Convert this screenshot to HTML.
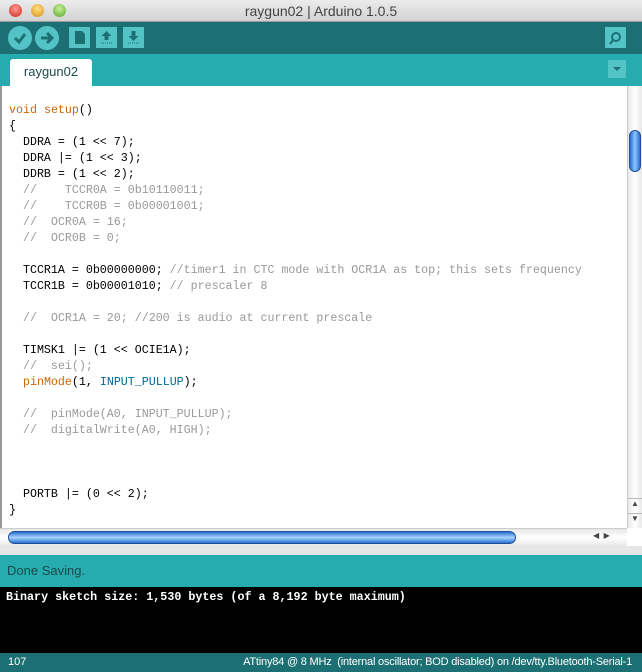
<!DOCTYPE html>
<html><head><meta charset="utf-8"><style>
*{margin:0;padding:0;box-sizing:border-box}
body{width:642px;height:672px;overflow:hidden;background:#fff;font-family:"Liberation Sans",sans-serif;position:relative}
.abs{position:absolute}
#title{left:0;top:0;width:642px;height:22px;background:linear-gradient(#ececec,#d2d2d2);border-bottom:1px solid #999;text-align:center;font-size:14px;line-height:22px;color:#444}
.tl{top:4px;width:13px;height:13px;border-radius:50%}
#tb{left:0;top:22px;width:642px;height:32px;background:#1c7074}
.rb{top:4px;width:24px;height:24px;border-radius:50%;background:#54c3c6}
.sb{top:5px;width:21px;height:21px;background:#54c3c6}
#tabs{left:0;top:54px;width:642px;height:32px;background:#26abae}
#tab{left:10px;top:5px;width:82px;height:27px;background:#fff;border-radius:3px 3px 0 0;font-size:13px;color:#1c4a4c;line-height:26px;text-align:center}
#ed{left:0;top:86px;width:627px;height:442px;background:#fff;border-left:2px solid #999}
pre{position:absolute;left:7px;top:17px;font-family:"Liberation Mono",monospace;font-size:11.65px;line-height:16px;color:#000}
.k{color:#cc6600}.c{color:#999}.t{color:#006699}
#vs{left:627px;top:86px;width:15px;height:442px;background:linear-gradient(90deg,#e8e8e8,#fff,#e8e8e8);border-left:1px solid #ccc}
#hs{left:0;top:528px;width:627px;height:18px;background:linear-gradient(#e8e8e8,#fff,#e8e8e8);border-top:1px solid #ccc}
#gs{left:0;top:546px;width:642px;height:9px;background:#e6e6e6}
#st{left:0;top:555px;width:642px;height:32px;background:#26abae;font-size:13px;color:#1c4a4c;padding:8px 0 0 7px}
#con{left:0;top:587px;width:642px;height:66px;background:#000;color:#fff;font-family:"Liberation Mono",monospace;font-weight:bold;font-size:11.7px;padding:3px 0 0 6px}
#bot{left:0;top:653px;width:642px;height:19px;background:#1c7074;color:#fff;font-size:11px;line-height:19px}
</style></head><body>
<div id="title" class="abs">raygun02 | Arduino 1.0.5</div>
<div class="abs tl" style="left:9px;background:radial-gradient(circle at 50% 35%,#ff9a90,#d0281c)"></div>
<div class="abs tl" style="left:31px;background:radial-gradient(circle at 50% 35%,#ffe08a,#d89010)"></div>
<div class="abs tl" style="left:53px;background:radial-gradient(circle at 50% 35%,#c8f098,#58a82a)"></div>
<div id="tb" class="abs">
 <div class="abs rb" style="left:8px"><svg width="24" height="24"><path d="M7 12l4 4 6-8" stroke="#1c7074" stroke-width="3" fill="none"/></svg></div>
 <div class="abs rb" style="left:35px"><svg width="24" height="24"><path d="M6 12h9M12 7l5 5-5 5" stroke="#1c7074" stroke-width="3" fill="none"/></svg></div>
 <div class="abs sb" style="left:69px"><svg width="21" height="21"><path d="M6 4h7l3 3v10H6z" fill="#1c7074"/></svg></div>
 <div class="abs sb" style="left:96px"><svg width="21" height="21"><path d="M10.5 4l5 5h-3v4h-4V9h-3z" fill="#1c7074"/><path d="M5 16h11" stroke="#1c7074" stroke-dasharray="1 1"/></svg></div>
 <div class="abs sb" style="left:123px"><svg width="21" height="21"><path d="M10.5 14l5-5h-3V4h-4v5h-3z" fill="#1c7074"/><path d="M5 16h11" stroke="#1c7074" stroke-dasharray="1 1"/></svg></div>
 <div class="abs sb" style="left:605px"><svg width="21" height="21"><circle cx="11" cy="10" r="4" stroke="#1c7074" stroke-width="2" fill="none"/><path d="M8 13l-3 4" stroke="#1c7074" stroke-width="2"/></svg></div>
</div>
<div id="tabs" class="abs"><div id="tab" class="abs">raygun02</div>
 <div class="abs" style="left:608px;top:6px;width:18px;height:18px;background:#54c3c6"><svg width="18" height="18"><path d="M5 7h8l-4 4z" fill="#1c7074"/></svg></div></div>
<div id="ed" class="abs"><pre><span class="k">void</span> <span class="k">setup</span>()
{
  DDRA = (1 &lt;&lt; 7);
  DDRA |= (1 &lt;&lt; 3);
  DDRB = (1 &lt;&lt; 2);
<span class="c">  //    TCCR0A = 0b10110011;
  //    TCCR0B = 0b00001001;
  //  OCR0A = 16;
  //  OCR0B = 0;</span>

  TCCR1A = 0b00000000; <span class="c">//timer1 in CTC mode with OCR1A as top; this sets frequency</span>
  TCCR1B = 0b00001010; <span class="c">// prescaler 8</span>

<span class="c">  //  OCR1A = 20; //200 is audio at current prescale</span>

  TIMSK1 |= (1 &lt;&lt; OCIE1A);
<span class="c">  //  sei();</span>
  <span class="k">pinMode</span>(1, <span class="t">INPUT_PULLUP</span>);

<span class="c">  //  pinMode(A0, INPUT_PULLUP);
  //  digitalWrite(A0, HIGH);</span>



  PORTB |= (0 &lt;&lt; 2);
}</pre></div>
<div id="vs" class="abs">
 <div class="abs" style="left:1px;top:44px;width:12px;height:42px;border-radius:6px;background:linear-gradient(90deg,#2a6fd0,#8cc4ff,#2a6fd0);border:1px solid #1d4f9a"></div>
 <div class="abs" style="left:0;top:412px;width:14px;height:15px;border-top:1px solid #bbb;font-size:8px;text-align:center;color:#444">▲</div>
 <div class="abs" style="left:0;top:427px;width:14px;height:15px;border-top:1px solid #bbb;font-size:8px;text-align:center;color:#444">▼</div>
</div>
<div id="hs" class="abs">
 <div class="abs" style="left:8px;top:2px;width:508px;height:13px;border-radius:7px;background:linear-gradient(#2a6fd0,#a8d4ff,#2a6fd0);border:1px solid #1d4f9a"></div>
 <div class="abs" style="left:593px;top:2px;font-size:8px;color:#444">◀ &nbsp;▶</div>
</div>
<div id="gs" class="abs"></div>
<div id="st" class="abs">Done Saving.</div>
<div id="con" class="abs">Binary sketch size: 1,530 bytes (of a 8,192 byte maximum)</div>
<div id="bot" class="abs"><span style="position:absolute;left:8px">107</span><span style="position:absolute;right:10px;letter-spacing:-0.2px">ATtiny84 @ 8 MHz &nbsp;(internal oscillator; BOD disabled) on /dev/tty.Bluetooth-Serial-1</span></div>
</body></html>
